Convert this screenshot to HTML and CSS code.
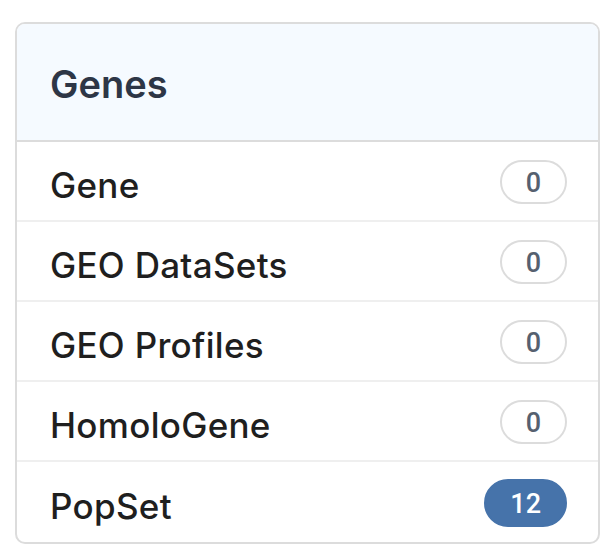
FILE: index.html
```html
<!DOCTYPE html>
<html lang="en">
<head>
<meta charset="utf-8">
<title>Genes</title>
<link rel="stylesheet" href="styles.css">
</head>
<body>
<section class="card">
  <header class="card-header"><h2 class="title">Genes</h2></header>
  <ul class="list">
    <li class="item"><span class="label">Gene</span><span class="badge">0</span></li>
    <li class="item"><span class="label">GEO DataSets</span><span class="badge">0</span></li>
    <li class="item"><span class="label">GEO Profiles</span><span class="badge">0</span></li>
    <li class="item"><span class="label">HomoloGene</span><span class="badge">0</span></li>
    <li class="item"><span class="label">PopSet</span><span class="badge badge-active">12</span></li>
  </ul>
</section>
</body>
</html>
```
FILE: styles.css
```css
html, body {
  margin: 0;
  padding: 0;
  background: #ffffff;
}
body {
  padding: 22px 16px 0 15px;
  font-family: Inter, "Noto Sans", sans-serif;
}
.card {
  width: 585px;
  box-sizing: border-box;
  border: 2px solid #dcdcdc;
  border-radius: 10px;
  overflow: hidden;
  background: #fff;
}
.card-header {
  height: 116px;
  box-sizing: content-box;
  background: #f5faff;
  border-bottom: 2px solid #dcdcdc;
  display: flex;
  align-items: center;
  padding: 0 33px;
}
.title {
  margin: 0;
  padding-top: 4px;
  font-size: 38px;
  font-weight: 600;
  color: #2d3646;
  letter-spacing: 0;
}
.list {
  list-style: none;
  margin: 0;
  padding: 0;
}
.item {
  height: 78px;
  display: flex;
  align-items: center;
  justify-content: space-between;
  padding: 0 31px 0 33px;
  border-bottom: 2px solid #efefef;
}
.item:last-child {
  border-bottom: none;
  height: 80px;
}
.label {
  padding-top: 7px;
  font-size: 35px;
  font-weight: 500;
  color: #1f1f1f;
  letter-spacing: 0.3px;
}
.badge {
  font-family: Roboto, "Noto Sans", sans-serif;
  font-size: 27px;
  font-weight: 500;
  color: #566070;
  height: 40px;
  line-height: 42px;
  padding: 0 24px;
  border: 2px solid #dcdcdc;
  border-radius: 999px;
  background: #fff;
  margin-top: 2px;
}
.badge-active {
  background: #4673aa;
  border-color: #4673aa;
  color: #ffffff;
  height: 44px;
  line-height: 46px;
}
```
